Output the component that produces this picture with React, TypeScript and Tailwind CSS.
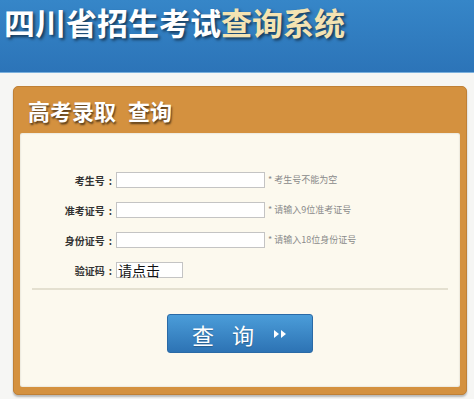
import React from 'react';

const cjk = "font-['Noto_Sans_CJK_SC','Noto_Sans',sans-serif]";

const Arrows: React.FC = () => (
  <svg width="16" height="10" viewBox="0 0 16 10" className="ml-[18px]">
    <path d="M2 1 L7 5 L2 9 Z" fill="#ffffff" />
    <path d="M9 1 L14 5 L9 9 Z" fill="#ffffff" />
  </svg>
);

const Label: React.FC<{ text: string }> = ({ text }) => (
  <label className="w-[95px] flex justify-end items-center text-[10px] font-bold text-[#333]">
    {text}
    <span className="ml-[4px] mr-[3px]">:</span>
  </label>
);

interface RowProps {
  label: string;
  hint?: string;
}

const FormRow: React.FC<RowProps> = ({ label, hint }) => (
  <div className="flex items-center h-[16px]">
    <Label text={label} />
    <input className="ml-[1px] w-[149px] h-[16px] border border-[#c4c4c4] bg-white outline-none" />
    {hint && <span className="ml-[3px] text-[9px] text-[#8a8a8a]">{hint}</span>}
  </div>
);

export default function App() {
  return (
    <div className={`w-[474px] h-[399px] overflow-hidden bg-[#f6f6f4] ${cjk}`}>
      <header className="h-[73px] bg-gradient-to-b from-[#3686c8] to-[#2c74b8] border-b border-[#7bb0dd]">
        <h1 className="pl-[4px] pt-[6px] text-[31px] font-bold leading-none [text-shadow:2px_2px_3px_rgba(0,0,0,0.55)]">
          <span className="text-white">四川省招生考试</span>
          <span className="text-[#f4e3b2]">查询系统</span>
        </h1>
      </header>

      <section className="mt-[13px] ml-[13px] w-[454px] rounded-[5px] bg-[#d4913f] border border-[#bf8036] px-[6px] pb-[7px] shadow-[0_2px_2px_rgba(0,0,0,0.25)]">
        <div className="h-[46px] flex items-center pl-[8px]">
          <h2 className="text-[22px] font-bold text-white leading-none [text-shadow:1px_2px_2px_rgba(0,0,0,0.6)]">
            高考录取<span className="ml-[12px]">查询</span>
          </h2>
        </div>

        <div className="bg-[#fcf9ee] rounded-[2px] shadow-[inset_0_0_2px_rgba(0,0,0,0.2)] pt-[39px] pb-[34px]">
          <div className="flex flex-col gap-[14px]">
            <FormRow label="考生号" hint="* 考生号不能为空" />
            <FormRow label="准考证号" hint="* 请输入9位准考证号" />
            <FormRow label="身份证号" hint="* 请输入18位身份证号" />
            <div className="flex items-center h-[16px]">
              <Label text="验证码" />
              <div className="ml-[1px] w-[67px] h-[16px] border border-[#c4c4c4] bg-white text-[14px] leading-[14px] text-[#111] pl-[1px] overflow-visible whitespace-nowrap">
                请点击
              </div>
            </div>
          </div>

          <div className="mt-[10px] mx-[12px] h-[2px] bg-[#e4e0d0]" />

          <div className="mt-[24px] flex justify-center">
            <button className="w-[146px] h-[39px] rounded-[3px] bg-gradient-to-b from-[#4b9dd9] to-[#2d73b4] border border-[#2a6aa6] flex items-center justify-center text-white text-[22px] leading-none [text-shadow:0_1px_1px_rgba(0,0,0,0.25)]">
              <span>查</span>
              <span className="ml-[18px]">询</span>
              <Arrows />
            </button>
          </div>
        </div>
      </section>
    </div>
  );
}
